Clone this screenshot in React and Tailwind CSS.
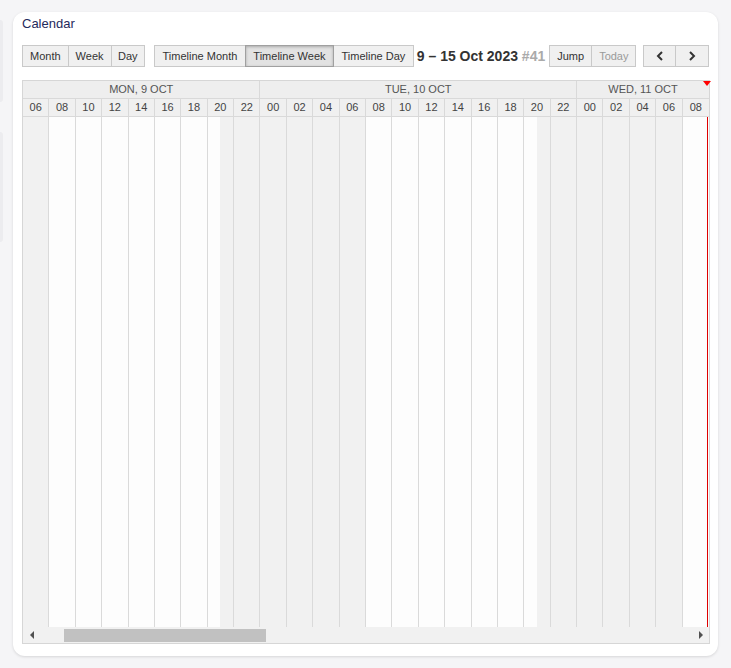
import React from "react";

const font = { fontFamily: '"Liberation Sans", Arial, sans-serif' };

const days = [
  { label: "MON, 9 OCT", hours: [6, 8, 10, 12, 14, 16, 18, 20, 22], span: "col-span-9" },
  { label: "TUE, 10 OCT", hours: [0, 2, 4, 6, 8, 10, 12, 14, 16, 18, 20, 22], span: "col-span-12" },
  { label: "WED, 11 OCT", hours: [0, 2, 4, 6, 8], span: "col-span-5" },
];

const slots = days.flatMap((d) => d.hours);

// business hours 08:00 - 21:00
const isOpen = (h) => h >= 8 && h < 21;

const Btn = ({ children, active, dim, first, className = "px-[7px]" }) => (
  <button
    className={
      "h-[22px] text-[11px] leading-[20px] border " +
      (first ? "" : "-ml-px ") +
      (active
        ? "bg-[#e2e2e2] border-[#a0a0a0] shadow-[inset_0_1px_3px_rgba(0,0,0,0.25)] relative z-10 "
        : "bg-[#f0f0f0] border-[#c9c9c9] ") +
      (dim ? "text-[#9a9a9a] " : "text-[#333] ") +
      className
    }
  >
    {children}
  </button>
);

const Chevron = ({ dir }) => (
  <svg width="8" height="10" viewBox="0 0 8 10" className="mx-auto">
    <path
      d={dir === "left" ? "M6 1 L2 5 L6 9" : "M2 1 L6 5 L2 9"}
      fill="none"
      stroke="#333"
      strokeWidth="2"
    />
  </svg>
);

export default function App() {
  return (
    <div className="min-h-screen bg-[#f5f5f7] flex pt-[12px]" style={font}>
      <div className="w-[3px] flex flex-col pt-[8px] gap-[30px]">
        <div className="h-[82px] bg-[#ececef] rounded-r" />
        <div className="h-[110px] bg-[#ececef] rounded-r" />
      </div>

      <div className="ml-[10px] w-[705px] h-[644px] bg-white rounded-xl shadow-[0_1px_3px_rgba(0,0,0,0.13)] px-[9px] pt-[4px]">
        <div className="text-[13px] leading-[16px] text-[#1f2a5c]">Calendar</div>

        <div className="mt-[13px] flex items-center">
          <div className="flex">
            <Btn first>Month</Btn>
            <Btn>Week</Btn>
            <Btn className="px-[6.5px]">Day</Btn>
          </div>
          <div className="flex ml-[9px]">
            <Btn first className="px-[7.5px]">Timeline Month</Btn>
            <Btn active className="px-[7.5px]">Timeline Week</Btn>
            <Btn className="px-[7.5px]">Timeline Day</Btn>
          </div>
          <div className="ml-[3px] text-[14px] font-bold text-[#333] leading-[22px] whitespace-nowrap">
            9 – 15 Oct 2023 <span className="text-[#aaa]">#41</span>
          </div>
          <div className="flex ml-[4px]">
            <Btn first>Jump</Btn>
            <Btn dim>Today</Btn>
          </div>
          <div className="flex ml-auto">
            <Btn first className="w-[33px]">
              <Chevron dir="left" />
            </Btn>
            <Btn className="w-[34px]">
              <Chevron dir="right" />
            </Btn>
          </div>
        </div>

        <div className="mt-[13px] w-[688px] border border-[#d6d6d6]">
          <div className="grid grid-cols-[repeat(26,minmax(0,1fr))] h-[18px] bg-[#eeeeee] border-b border-[#d9d9d9] relative">
            {days.map((d, i) => (
              <div
                key={d.label}
                className={
                  d.span +
                  " text-center text-[11px] leading-[17px] text-[#555] " +
                  (i < days.length - 1 ? "border-r border-[#d9d9d9]" : "")
                }
              >
                {d.label}
              </div>
            ))}
            <div className="absolute right-[-2px] top-0 w-0 h-0 border-l-[4px] border-r-[4px] border-t-[5px] border-l-transparent border-r-transparent border-t-[#ff0000]" />
          </div>

          <div className="grid grid-cols-[repeat(26,minmax(0,1fr))] h-[18px] bg-[#f0f0f0] border-b border-[#d9d9d9]">
            {slots.map((h, i) => (
              <div
                key={i}
                className={
                  "text-center text-[11px] leading-[17px] text-[#444] " +
                  (i < slots.length - 1 ? "border-r border-[#d9d9d9]" : "")
                }
              >
                {String(h).padStart(2, "0")}
              </div>
            ))}
          </div>

          <div className="grid grid-cols-[repeat(26,minmax(0,1fr))] h-[510px] relative">
            {slots.map((h, i) => (
              <div
                key={i}
                className={
                  "flex " + (i < slots.length - 1 ? "border-r border-[#dadada]" : "")
                }
              >
                <div className={"flex-1 " + (isOpen(h) ? "bg-[#fdfdfd]" : "bg-[#f1f1f1]")} />
                <div className={"flex-1 " + (isOpen(h + 1) ? "bg-[#fdfdfd]" : "bg-[#f1f1f1]")} />
              </div>
            ))}
            <div className="absolute top-0 bottom-0 right-[1px] w-px bg-[#e00000]" />
          </div>

          <div className="h-[16px] bg-[#f1f1f1] flex items-center">
            <div className="ml-[7px] w-0 h-0 border-t-[4px] border-b-[4px] border-r-[4px] border-t-transparent border-b-transparent border-r-[#505050]" />
            <div className="ml-[30px] w-[202px] h-[13px] bg-[#c1c1c1]" />
            <div className="ml-auto mr-[6px] w-0 h-0 border-t-[4px] border-b-[4px] border-l-[4px] border-t-transparent border-b-transparent border-l-[#505050]" />
          </div>
        </div>
      </div>
    </div>
  );
}
